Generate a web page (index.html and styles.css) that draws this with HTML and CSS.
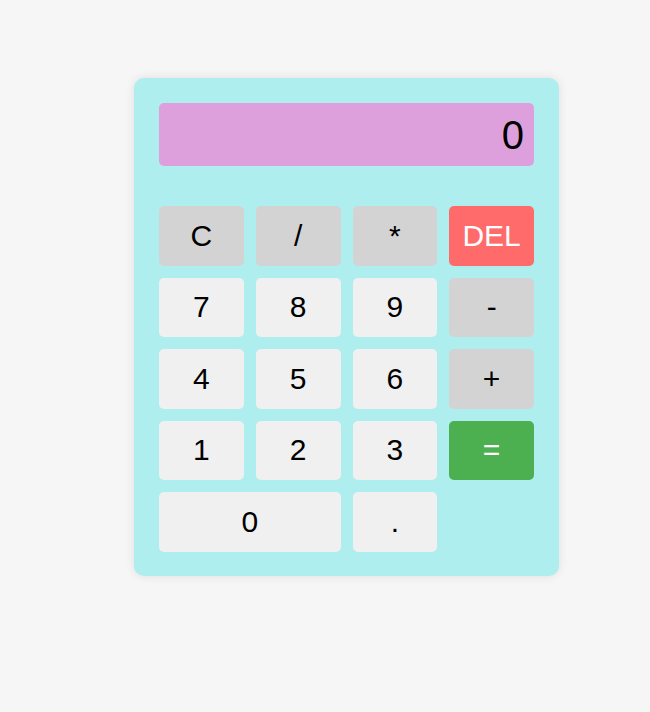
FILE: index.html
```html
<!DOCTYPE html>
<html lang="en">
<head>
<meta charset="utf-8">
<title>Calculator</title>
<link rel="stylesheet" href="styles.css">
</head>
<body>
  <div class="calculator">
    <div class="display">0</div>
    <div class="keys">
      <button class="key op">C</button>
      <button class="key op">/</button>
      <button class="key op">*</button>
      <button class="key del">DEL</button>
      <button class="key">7</button>
      <button class="key">8</button>
      <button class="key">9</button>
      <button class="key op">-</button>
      <button class="key">4</button>
      <button class="key">5</button>
      <button class="key">6</button>
      <button class="key op">+</button>
      <button class="key">1</button>
      <button class="key">2</button>
      <button class="key">3</button>
      <button class="key equals">=</button>
      <button class="key zero">0</button>
      <button class="key">.</button>
    </div>
  </div>
</body>
</html>
```
FILE: styles.css
```css
html, body {
  margin: 0;
  padding: 0;
}
body {
  background: #f6f6f6;
  font-family: "Liberation Sans", Arial, sans-serif;
  min-height: 712px;
}
.calculator {
  width: 375px;
  margin: 78px 0 0 134px;
  padding: 25px 25px 24px;
  background: #afeeee;
  border-radius: 10px;
  box-shadow: 0 0 10px rgba(0, 0, 0, 0.1);
}
.display {
  background: #dda0dd;
  border-radius: 5px;
  padding: 8.5px 10px;
  font-size: 40px;
  line-height: 46px;
  text-align: right;
  color: #000;
  margin-bottom: 40px;
}
.keys {
  display: grid;
  grid-template-columns: repeat(4, 1fr);
  gap: 12px;
}
.key {
  border: none;
  border-radius: 5px;
  background: #f0f0f0;
  color: #000;
  font-family: "Liberation Sans", Arial, sans-serif;
  font-size: 30px;
  line-height: 34.5px;
  padding: 12.5px 0;
  margin: 0;
}
.key.op {
  background: #d3d3d3;
}
.key.del {
  background: #ff6b6b;
  color: #fff;
}
.key.equals {
  background: #4caf50;
  color: #fff;
}
.key.zero {
  grid-column: span 2;
}
```
